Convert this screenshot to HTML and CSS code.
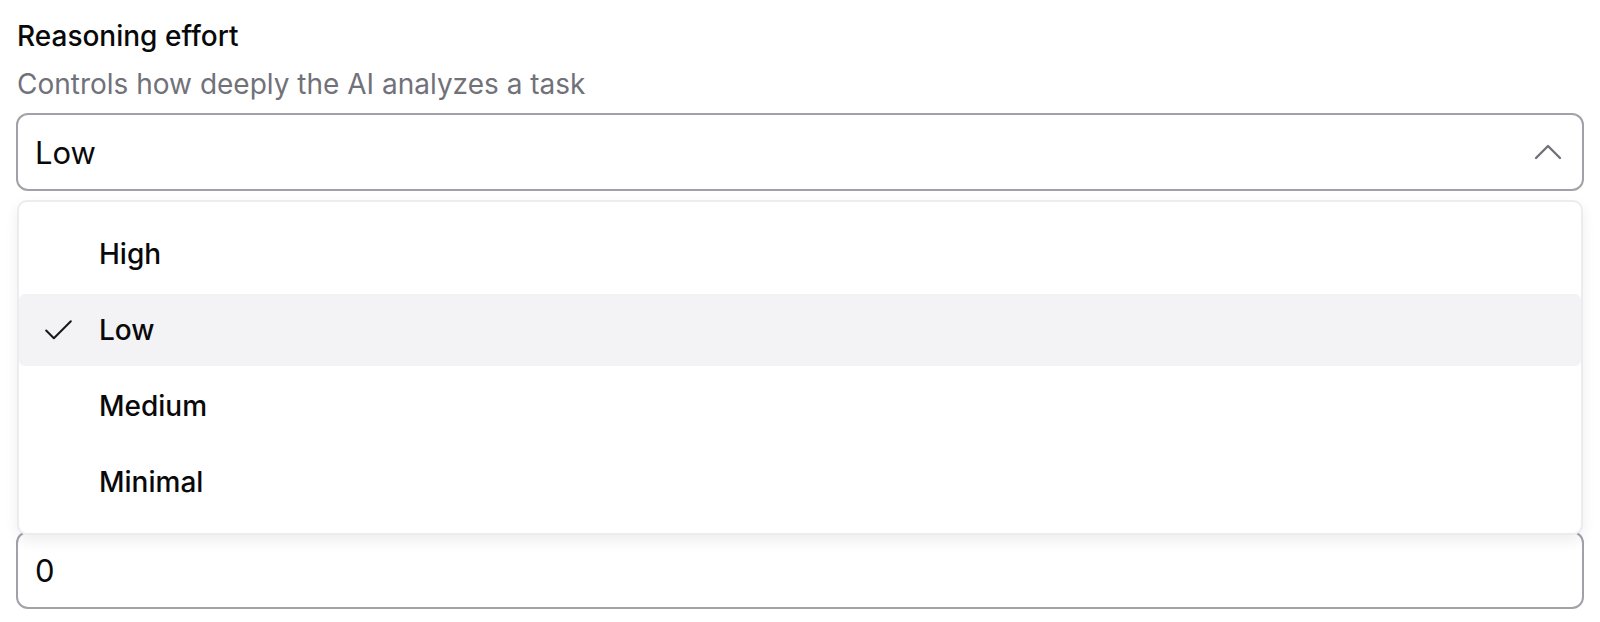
FILE: index.html
```html
<!DOCTYPE html>
<html lang="en">
<head>
<meta charset="utf-8">
<title>Reasoning effort</title>
<link rel="stylesheet" href="styles.css">
</head>
<body>
<div class="page">
  <div class="field">
    <div class="label">Reasoning effort</div>
    <div class="desc">Controls how deeply the AI analyzes a task</div>
    <div class="select-wrap">
      <div class="select">
        <span class="value">Low</span>
        <svg class="chevron" viewBox="0 0 24 24" width="48" height="48" fill="none" stroke="currentColor" stroke-width="1.2" stroke-linecap="round" stroke-linejoin="round"><path d="m18 15-6-6-6 6"/></svg>
      </div>
      <div class="menu">
        <div class="item"><span class="slot"></span><span>High</span></div>
        <div class="item selected"><span class="slot"><svg viewBox="0 0 24 24" width="37" height="37" fill="none" stroke="currentColor" stroke-width="1.3" stroke-linecap="round" stroke-linejoin="round"><path d="M20 6 9 17l-5-5"/></svg></span><span>Low</span></div>
        <div class="item"><span class="slot"></span><span>Medium</span></div>
        <div class="item"><span class="slot"></span><span>Minimal</span></div>
      </div>
    </div>
  </div>
  <div class="field field-next">
    <div class="input">0</div>
  </div>
</div>
</body>
</html>
```
FILE: styles.css
```css
html, body {
  margin: 0;
  padding: 0;
  background: #ffffff;
}
body {
  font-family: Inter, "Noto Sans", "Liberation Sans", sans-serif;
  color: #09090b;
}
.page {
  padding: 18px 16px 0 16px;
  display: flex;
  flex-direction: column;
}
.field {
  display: flex;
  flex-direction: column;
}
.field-next {
  margin-top: 340px;
}
.label {
  font-size: 28px;
  line-height: 36px;
  font-weight: 500;
  padding-left: 1px;
}
.desc {
  margin-top: 12px;
  font-size: 28px;
  line-height: 36px;
  color: #71717a;
  padding-left: 1px;
}
.select-wrap {
  position: relative;
  margin-top: 11px;
}
.select, .input {
  box-sizing: border-box;
  height: 78px;
  border: 2px solid #a1a1aa;
  border-radius: 12px;
  display: flex;
  align-items: center;
  justify-content: space-between;
  padding: 0 10px 0 17px;
  font-size: 31px;
  background: #fff;
}
.chevron {
  color: #71717a;
}
.menu {
  position: absolute;
  top: calc(100% + 9px);
  left: 1px;
  right: 1px;
  box-sizing: border-box;
  height: 335px;
  background: #fff;
  border: 2px solid #ececee;
  border-radius: 10px;
  box-shadow: 0 6px 14px rgba(0, 0, 0, 0.07);
  padding: 16px 0 14px;
  display: flex;
  flex-direction: column;
  gap: 4px;
  z-index: 10;
}
.item {
  height: 72px;
  flex: none;
  display: flex;
  align-items: center;
  padding-left: 21px;
  font-size: 28px;
  font-weight: 500;
  border-radius: 6px;
}
.item.selected {
  background: #f3f3f5;
}
.slot {
  width: 59px;
  height: 37px;
  display: flex;
  align-items: center;
  color: #18181b;
}
.slot svg {
  display: block;
}
```
